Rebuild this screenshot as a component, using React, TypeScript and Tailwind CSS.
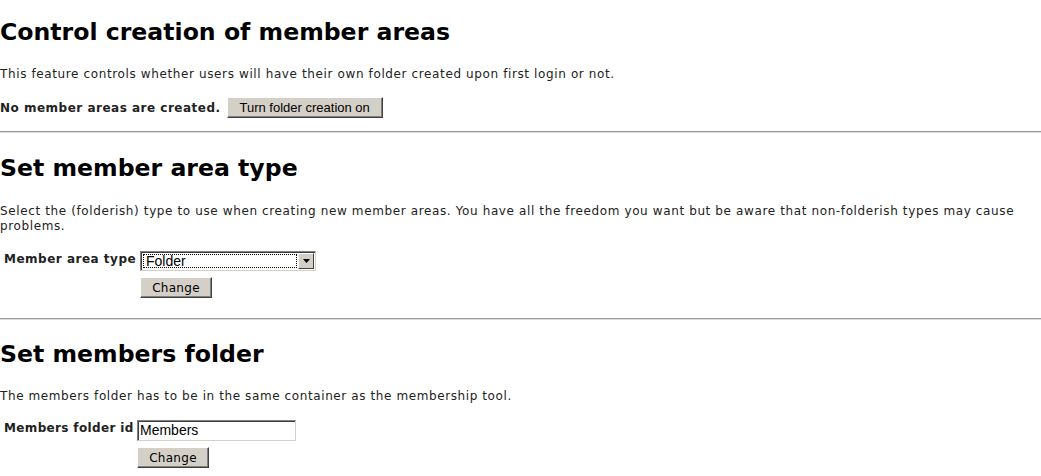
import React from "react";

const sans = { fontFamily: '"DejaVu Sans", Verdana, sans-serif' };

function WinButton({ children, className = "" }: { children: React.ReactNode; className?: string }) {
  return (
    <button
      type="button"
      className={`bg-[#d4d0c8] border border-t-white border-l-white border-r-[#404040] border-b-[#404040] shadow-[inset_-1px_-1px_0_#808080] text-black ${className}`}
    >
      {children}
    </button>
  );
}

function Rule() {
  return <div className="w-full border-t border-t-[#9a9a9a] border-b border-b-[#dcdcdc]" />;
}

export default function App() {
  return (
    <div className="w-[1041px] h-[476px] overflow-hidden bg-white text-[#222]" style={sans}>
      {/* Section 1 */}
      <h1 className="mt-[14px] h-[36px] leading-[36px] text-[23.6px] font-bold text-black">
        Control creation of member areas
      </h1>
      <p className="mt-[17px] text-[12px] tracking-[0.62px] leading-[15px]">
        This feature controls whether users will have their own folder created upon first login or not.
      </p>
      <div className="mt-[15px] flex items-center h-[21px]">
        <span className="text-[12px] tracking-[0.5px] font-bold">No member areas are created.</span>
        <WinButton className="ml-[6px] w-[156px] h-[21px] text-[13px] [font-family:'Liberation_Sans',Arial,sans-serif]">
          Turn folder creation on
        </WinButton>
      </div>
      <div className="mt-[13px]">
        <Rule />
      </div>

      {/* Section 2 */}
      <h2 className="mt-[17px] h-[36px] leading-[36px] text-[23.6px] font-bold text-black">
        Set member area type
      </h2>
      <p className="mt-[18px] text-[12px] tracking-[0.62px] leading-[15px] pr-[4px]">
        Select the (folderish) type to use when creating new member areas. You have all the freedom you want but be aware that non-folderish types may cause problems.
      </p>
      <div className="mt-[17px] flex items-start">
        <div className="w-[140px] pl-[4px] pt-[1px] text-[12px] tracking-[0.5px] font-bold leading-[15px] whitespace-nowrap">Member area type</div>
        <div className="flex flex-col">
          <div className="w-[176px] h-[20px] flex border border-t-[#808080] border-l-[#808080] border-r-[#d4d0c8] border-b-[#d4d0c8] bg-white shadow-[inset_1px_1px_0_#404040]">
            <div className="flex-1 m-[2px] mr-0 border border-dotted border-black flex items-center pl-[2px] text-[14px] leading-none [font-family:'Liberation_Sans',Arial,sans-serif] text-black">
              Folder
            </div>
            <div className="w-[16px] my-[1px] mr-[1px] ml-[1px] bg-[#d4d0c8] border border-t-white border-l-white border-r-[#404040] border-b-[#404040] flex items-center justify-center">
              <svg width="7" height="4" viewBox="0 0 7 4">
                <path d="M0 0h7L3.5 4z" fill="#000" />
              </svg>
            </div>
          </div>
          <WinButton className="mt-[6px] w-[72px] h-[21px] text-[12px] tracking-[0.3px]">Change</WinButton>
        </div>
      </div>
      <div className="mt-[20px]">
        <Rule />
      </div>

      {/* Section 3 */}
      <h2 className="mt-[16px] h-[36px] leading-[36px] text-[23.6px] font-bold text-black">
        Set members folder
      </h2>
      <p className="mt-[17px] text-[12px] tracking-[0.6px] leading-[15px]">
        The members folder has to be in the same container as the membership tool.
      </p>
      <div className="mt-[16px] flex items-start">
        <div className="w-[137px] pl-[4px] pt-[1px] text-[12px] tracking-[0.35px] font-bold leading-[15px] whitespace-nowrap">Members folder id</div>
        <div className="flex flex-col">
          <div className="w-[159px] h-[21px] border border-t-[#808080] border-l-[#808080] border-r-[#d4d0c8] border-b-[#d4d0c8] bg-white shadow-[inset_1px_1px_0_#404040] flex items-center pl-[2px] text-[14px] text-black [font-family:'Liberation_Sans',Arial,sans-serif]">
            Members
          </div>
          <WinButton className="mt-[6px] w-[72px] h-[21px] text-[12px] tracking-[0.3px]">Change</WinButton>
        </div>
      </div>
    </div>
  );
}
